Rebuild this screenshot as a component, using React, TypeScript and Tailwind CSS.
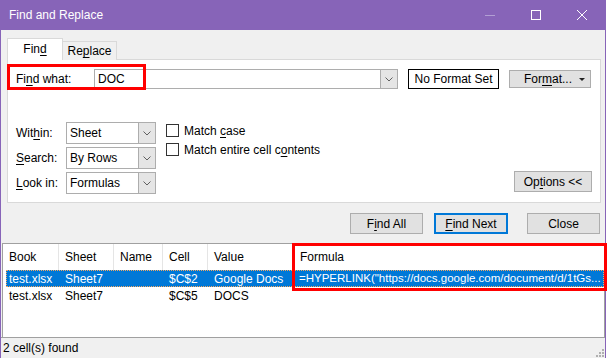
import React from "react";

const U = ({ children }: { children: React.ReactNode }) => <span className="underline underline-offset-[2px]">{children}</span>;

const Chevron = () => (
  <svg width="8" height="5" viewBox="0 0 8 5">
    <polyline points="0.5,0.5 4,4 7.5,0.5" fill="none" stroke="#606060" strokeWidth="1" />
  </svg>
);

const Select = ({ value }: { value: string }) => (
  <div className="flex h-[22px] w-[90px] border border-[#adadad] bg-white">
    <div className="flex-1 pl-[3px] flex items-center">{value}</div>
    <div className="w-[17px] border-l border-[#adadad] bg-[#e5e5e5] flex items-center justify-center">
      <Chevron />
    </div>
  </div>
);

const Check = ({ children }: { children: React.ReactNode }) => (
  <div className="flex items-center h-[19px]">
    <div className="w-[13px] h-[13px] border border-[#333] bg-white mr-[5px]" />
    <span>{children}</span>
  </div>
);

const Btn = ({ children, w, primary }: { children: React.ReactNode; w: string; primary?: boolean }) => (
  <div
    className={`h-[21px] ${w} flex items-center justify-center bg-[#e1e1e1] ${
      primary ? "border-2 border-[#0078d7]" : "border border-[#adadad]"
    }`}
  >
    {children}
  </div>
);

const headCols = ["w-[56px]", "w-[55px]", "w-[49px]", "w-[45px]", "w-[86px]", "flex-1"];
const rowCols = ["w-[53px] pl-[3px]", "w-[55px] pl-[6px]", "w-[49px] pl-[6px]", "w-[45px] pl-[6px]", "w-[86px] pl-[6px]", "flex-1 pl-[5px] text-[11.5px]"];

const Row = ({ cells, selected }: { cells: string[]; selected?: boolean }) => (
  <div
    className={`flex h-[17px] items-center ml-[3px] ${
      selected ? "bg-[#0078d7] text-white outline outline-1 outline-dotted outline-[#f5a860] -outline-offset-1" : ""
    }`}
  >
    {cells.map((c, i) => (
      <div key={i} className={`${rowCols[i]} whitespace-nowrap overflow-hidden`}>
        {c}
      </div>
    ))}
  </div>
);

const App = () => {
  return (
    <div className="w-[608px] h-[358px] bg-white overflow-hidden relative text-[12px] text-black" style={{ fontFamily: '"Liberation Sans", Arial, sans-serif' }}>
      <div className="w-[606px] h-full border-x border-[#8764b8] bg-[#f0f0f0] flex flex-col relative">
        {/* title bar */}
        <div className="h-[30px] bg-[#8764b8] text-white flex items-center shrink-0">
          <span className="pl-[8px] flex-1 text-[12px]">Find and Replace</span>
          <div className="w-[46px] h-full flex items-center justify-center">
            <div className="w-[10px] h-px bg-[#b29fd4]" />
          </div>
          <div className="w-[46px] h-full flex items-center justify-center">
            <div className="w-[10px] h-[10px] border border-white" />
          </div>
          <div className="w-[46px] h-full flex items-center justify-center">
            <svg width="10" height="10" viewBox="0 0 10 10">
              <path d="M0 0 L10 10 M10 0 L0 10" stroke="white" strokeWidth="1" />
            </svg>
          </div>
        </div>

        {/* tabs */}
        <div className="flex items-end pl-[6px] mt-[8px] h-[22px] relative z-10">
          <div className="w-[56px] h-[22px] bg-white border border-b-0 border-[#d9d9d9] flex items-center justify-center pb-[1px]">
            Fin<U>d</U>
          </div>
          <div className="w-[54px] h-[19px] bg-[#f0f0f0] border border-l-0 border-b-0 border-[#d9d9d9] flex items-center justify-center">
            Re<U>p</U>lace
          </div>
        </div>

        {/* panel */}
        <div className="ml-[6px] mr-[4px] -mt-px h-[144px] bg-white border border-[#d9d9d9] flex flex-col px-[8px]">
          <div className="flex items-center mt-[9px] h-[20px]">
            <span className="w-[78px]">Fi<U>n</U>d what:</span>
            <div className="w-[304px] h-[20px] border border-[#adadad] flex">
              <div className="flex-1 pl-[3px] flex items-center">DOC</div>
              <div className="w-[17px] border-l border-[#adadad] bg-[#e5e5e5] flex items-center justify-center">
                <Chevron />
              </div>
            </div>
            <div className="ml-[10px] w-[91px] h-[20px] border border-black flex items-center justify-center">No Format Set</div>
            <div className="ml-[10px] w-[82px] h-[18px] border border-[#adadad] bg-[#e1e1e1] flex items-center justify-center relative">
              <span className="pr-[4px]">For<U>m</U>at...</span>
              <svg className="absolute right-[5px] top-[7px]" width="6" height="3" viewBox="0 0 6 3">
                <polygon points="0,0 6,0 3,3" fill="#222" />
              </svg>
            </div>
          </div>

          <div className="flex mt-[33px]">
            <div className="flex flex-col gap-[3px]">
              <div className="flex items-center">
                <span className="w-[50px]">Wit<U>h</U>in:</span>
                <Select value="Sheet" />
              </div>
              <div className="flex items-center">
                <span className="w-[50px]"><U>S</U>earch:</span>
                <Select value="By Rows" />
              </div>
              <div className="flex items-center">
                <span className="w-[50px]"><U>L</U>ook in:</span>
                <Select value="Formulas" />
              </div>
            </div>
            <div className="flex flex-col ml-[10px] -mt-[1px]">
              <Check>
                Match <U>c</U>ase
              </Check>
              <Check>
                Match entire cell c<U>o</U>ntents
              </Check>
            </div>
            <div className="flex-1" />
            <div className="self-end mb-[2px] w-[78px] h-[21px] border border-[#adadad] bg-[#e1e1e1] flex items-center justify-center">
              Op<U>t</U>ions &lt;&lt;
            </div>
          </div>
        </div>

        {/* buttons */}
        <div className="flex justify-end items-center mt-[10px] pr-[5px] h-[21px]">
          <Btn w="w-[73px]">
            F<U>i</U>nd All
          </Btn>
          <div className="w-[11px]" />
          <Btn w="w-[74px]" primary>
            <U>F</U>ind Next
          </Btn>
          <div className="w-[19px]" />
          <Btn w="w-[73px]">Close</Btn>
        </div>

        {/* results list */}
        <div className="mt-[9px] ml-px h-[94px] bg-white border border-[#a0a0a0] border-b-0 flex flex-col">
          <div className="flex h-[26px] items-center">
            {["Book", "Sheet", "Name", "Cell", "Value", "Formula"].map((h, i) => (
              <div key={h} className={`${headCols[i]} h-full flex items-center pl-[6px] ${i < 5 ? "border-r border-[#e5e5e5]" : ""}`}>
                {h}
              </div>
            ))}
          </div>
          <Row selected cells={["test.xlsx", "Sheet7", "", "$C$2", "Google Docs", '=HYPERLINK("https://docs.google.com/document/d/1tGs...']} />
          <Row cells={["test.xlsx", "Sheet7", "", "$C$5", "DOCS", ""]} />
        </div>

        {/* status bar */}
        <div className="flex-1 border-t border-[#a0a0a0] flex items-center pl-[2px] relative">
          2 cell(s) found
          <svg className="absolute right-[1px] bottom-[1px]" width="10" height="10" viewBox="0 0 10 10">
            {[
              [8, 2],
              [5, 5],
              [8, 5],
              [2, 8],
              [5, 8],
              [8, 8],
            ].map(([x, y], i) => (
              <rect key={i} x={x} y={y} width="2" height="2" fill="#b0b0b0" />
            ))}
          </svg>
        </div>

        {/* annotation box */}
        <div className="absolute left-[6px] top-[64px] w-[139px] h-[26px] border-[3px] border-[#ff0000] pointer-events-none" />
      </div>
      <div className="absolute left-[292px] top-[243px] w-[315px] h-[48px] border-[3px] border-[#ff0000] pointer-events-none" />
    </div>
  );
};

export default App;
